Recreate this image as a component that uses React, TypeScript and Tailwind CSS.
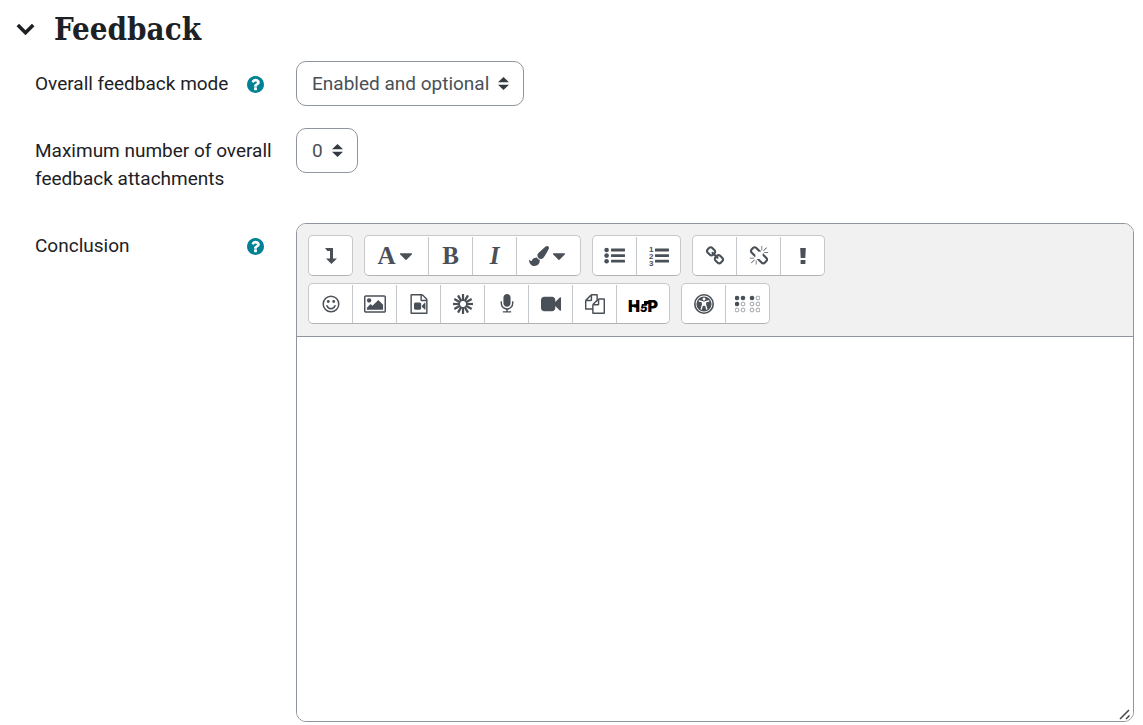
import type { ReactNode } from "react";

function Glyph({ d, className = "size-5", box = "0 0 1792 1792" }: { d: string; className?: string; box?: string }) {
  return (
    <svg viewBox={box} className={className} fill="currentColor" aria-hidden="true">
      <path d={d} />
    </svg>
  );
}

const QUESTION =
  "M1024 1376v-192q0-14-9-23t-23-9h-192q-14 0-23 9t-9 23v192q0 14 9 23t23 9h192q14 0 23-9t9-23zm256-672q0-88-55.5-163t-138.5-116-170-41q-243 0-371 213-15 24 8 42l132 100q7 6 19 6 16 0 25-12 53-68 86-92 34-24 86-24 48 0 85.5 26t37.5 59q0 38-20 61t-68 45q-63 28-115.5 86.5t-52.5 125.5v36q0 14 9 23t23 9h192q14 0 23-9t9-23q0-19 21.5-49.5t54.5-49.5q32-18 49-28.5t46-35 44.5-48 28-60.5 12.5-81zm384 192q0 209-103 385.5t-279.5 279.5-385.5 103-385.5-103-279.5-279.5-103-385.5 103-385.5 279.5-279.5 385.5-103 385.5 103 279.5 279.5 103 385.5z";
const CARET =
  "M1408 704q0 26-19 45l-448 448q-19 19-45 19t-45-19l-448-448q-19-19-19-45t19-45 45-19h896q26 0 45 19t19 45z";
const BRUSH =
  "M1615 0q70 0 122 46.5t52 116.5q0 63-45 151-332 629-465 752-97 91-218 91-126 0-216.5-92.5t-90.5-219.5q0-128 92-212l638-579q59-54 131-54zm-909 1034q39 76 106.5 130t150.5 76l1 71q4 213-129.5 347t-348.5 134q-123 0-218-46.5t-152.5-127.5-86.5-183-29-220q7 5 41 30t62 44.5 59 36.5 46 17q41 0 55-37 25-66 57.5-112.5t69.5-76 88-47.5 103-25.5 125-10.5z";
const LINK =
  "M1520 1216q0-40-28-68l-208-208q-28-28-68-28-42 0-72 32 3 3 19 18.5t21.5 21.5 15 19 13 25.5 3.5 27.5q0 40-28 68t-68 28q-15 0-27.5-3.5t-25.5-13-19-15-21.5-21.5-18.5-19q-33 31-33 73 0 40 28 68l206 207q27 27 68 27 40 0 68-26l147-146q28-28 28-67zm-703-705q0-40-28-68l-206-207q-28-28-68-28-39 0-68 27l-147 146q-28 28-28 67 0 40 28 68l208 208q27 27 68 27 42 0 72-31-3-3-19-18.5t-21.5-21.5-15-19-13-25.5-3.5-27.5q0-40 28-68t68-28q15 0 27.5 3.5t25.5 13 19 15 21.5 21.5 18.5 19q33-31 33-73zm895 705q0 120-85 203l-147 146q-83 83-203 83-121 0-204-85l-206-207q-83-83-83-203 0-123 88-209l-88-88q-86 88-208 88-120 0-204-84l-208-208q-84-84-84-204t85-203l147-146q83-83 203-83 121 0 204 85l206 207q83 83 83 203 0 123-88 209l88 88q86-88 208-88 120 0 204 84l208 208q84 84 84 204z";
const UNLINK =
  "M503 1271l-256 256q-10 9-23 9-12 0-23-9-9-10-9-23t9-23l256-256q10-9 23-9t23 9q9 10 9 23t-9 23zm169 41v320q0 14-9 23t-23 9-23-9-9-23v-320q0-14 9-23t23-9 23 9 9 23zm-224-224q0 14-9 23t-23 9h-320q-14 0-23-9t-9-23 9-23 23-9h320q14 0 23 9t9 23zm1264 128q0 120-85 203l-147 146q-83 83-203 83-121 0-204-85l-334-335q-21-21-42-56l239-18 273 274q28 28 68 27.5t68-27.5l147-146q28-28 28-67 0-40-28-68l-274-275 18-239q35 21 56 42l336 336q84 86 84 204zm-617-724l-239 18-273-274q-28-28-68-28-39 0-68 27l-147 146q-28 28-28 67 0 40 28 68l274 274-18 240q-35-21-56-42l-336-336q-84-86-84-204 0-120 85-203l147-146q83-83 203-83 121 0 204 85l334 335q21 21 42 56zm633 84q0 14-9 23t-23 9h-320q-14 0-23-9t-9-23 9-23 23-9h320q14 0 23 9t9 23zm-544-544v320q0 14-9 23t-23 9-23-9-9-23v-320q0-14 9-23t23-9 23 9 9 23zm407 151l-256 256q-11 9-23 9t-23-9q-9-10-9-23t9-23l256-256q10-9 23-9t23 9q9 10 9 23t-9 23z";
const PICTURE =
  "M576 576q0 80-56 136t-136 56-136-56-56-136 56-136 136-56 136 56 56 136zm1024 384v448h-1408v-192l320-320 160 160 512-512zm96-704h-1600q-13 0-22.5 9.5t-9.5 22.5v1216q0 13 9.5 22.5t22.5 9.5h1600q13 0 22.5-9.5t9.5-22.5v-1216q0-13-9.5-22.5t-22.5-9.5zm160 32v1216q0 66-47 113t-113 47h-1600q-66 0-113-47t-47-113v-1216q0-66 47-113t113-47h1600q66 0 113 47t47 113z";
const FILE_VIDEO =
  "M1596 380q28 28 48 76t20 88v1152q0 40-28 68t-68 28h-1344q-40 0-68-28t-28-68v-1600q0-40 28-68t68-28h896q40 0 88 20t76 48zm-444-244v376h376q-10-29-22-41l-313-313q-12-12-41-22zm384 1528v-1024h-416q-40 0-68-28t-28-68v-416h-768v1536h1280zm-576-896q52 0 90 38t38 90v384q0 52-38 90t-90 38h-384q-52 0-90-38t-38-90v-384q0-52 38-90t90-38h384zm492 2q20 8 20 30v576q0 22-20 30-8 2-12 2-14 0-23-9l-265-266v-90l265-266q9-9 23-9 4 0 12 2z";
const MICROPHONE =
  "M1472 704v128q0 221-147.5 384.5t-364.5 187.5v132h256q26 0 45 19t19 45-19 45-45 19h-640q-26 0-45-19t-19-45 19-45 45-19h256v-132q-217-24-364.5-187.5t-147.5-384.5v-128q0-26 19-45t45-19 45 19 19 45v128q0 185 131.5 316.5t316.5 131.5 316.5-131.5 131.5-316.5v-128q0-26 19-45t45-19 45 19 19 45zm-256-384v512q0 132-94 226t-226 94-226-94-94-226v-512q0-132 94-226t226-94 226 94 94 226z";
const VIDEO =
  "M1792 352v1088q0 42-39 59-13 5-25 5-27 0-45-19l-403-403v166q0 119-84.5 203.5t-203.5 84.5h-704q-119 0-203.5-84.5t-84.5-203.5v-704q0-119 84.5-203.5t203.5-84.5h704q119 0 203.5 84.5t84.5 203.5v165l403-402q18-19 45-19 12 0 25 5 39 17 39 59z";
const FILES =
  "M1696 384q40 0 68 28t28 68v1216q0 40-28 68t-68 28h-960q-40 0-68-28t-28-68v-288h-544q-40 0-68-28t-28-68v-672q0-40 20-88t48-76l408-408q28-28 76-48t88-20h416q40 0 68 28t28 68v328q68-40 128-40h416zm-544 213l-299 299h299v-299zm-640-384l-299 299h299v-299zm196 647l316-316v-416h-384v416q0 40-28 68t-68 28h-416v640h512v-256q0-40 20-88t48-76zm956 804v-1152h-384v416q0 40-28 68t-68 28h-416v640h896z";

const SPOKES = [0, 30, 60, 90, 120, 150, 180, 210, 240, 270, 300, 330];

const BRAILLE = [
  [2, 3, true], [8, 3, true], [2, 9, true], [8, 9, false], [2, 15, false], [8, 15, false],
  [17, 3, true], [23, 3, false], [17, 9, false], [23, 9, false], [17, 15, false], [23, 15, false],
] as const;

function ListIcon({ ordered = false }: { ordered?: boolean }) {
  return (
    <svg viewBox="0 0 22 24" className="h-6 w-[22px]" fill="currentColor" aria-hidden="true">
      <rect x="7" y="4.6" width="14" height="2.8" rx=".4" />
      <rect x="7" y="10.2" width="14" height="2.8" rx=".4" />
      <rect x="7" y="15.8" width="14" height="2.8" rx=".4" />
      {ordered ? (
        <g fontFamily="Liberation Sans, sans-serif" fontWeight="700" fontSize="8">
          <text x="1" y="7.500">1</text>
          <text x="1" y="14.500">2</text>
          <text x="1" y="21.500">3</text>
        </g>
      ) : (
        <>
          <circle cx="2.6" cy="6" r="2.3" />
          <circle cx="2.6" cy="11.6" r="2.3" />
          <circle cx="2.6" cy="17.2" r="2.3" />
        </>
      )}
    </svg>
  );
}

function Tool({ label, width = "w-[43px]", children }: { label: string; width?: string; children: ReactNode }) {
  return (
    <button
      type="button"
      aria-label={label}
      title={label}
      className={`mt-px box-content flex h-[38px] items-center justify-center border-[#c4c8cc] text-[#495057] ${width}`}
    >
      {children}
    </button>
  );
}

function Group({ children }: { children: ReactNode }) {
  return (
    <div role="group" className="flex divide-x divide-[#c4c8cc] rounded-[5px] border border-[#c8c8c8] border-b-[#b3b3b3] bg-white">
      {children}
    </div>
  );
}

function Help({ label }: { label: string }) {
  return (
    <button type="button" aria-label={label} className="mr-8 flex h-7 items-center text-[#008196]">
      <Glyph d={QUESTION} box="128 128 1536 1536" className="size-[17px]" />
    </button>
  );
}

function Choice({ id, options }: { id: string; options: string[] }) {
  return (
    <div className="relative w-fit">
      <select
        id={id}
        className="field-sizing-content h-[45px] appearance-none rounded-[10px] border border-[#8f959e] bg-white pr-[34px] pl-[15px] text-[19px] text-[#495057]"
      >
        {options.map((option) => (
          <option key={option}>{option}</option>
        ))}
      </select>
      <svg viewBox="0 0 4 5" className="pointer-events-none absolute top-4 right-[15px] h-[13px] w-[11px]" fill="#343a40" preserveAspectRatio="none" aria-hidden="true">
        <path d="M2 0L0 2h4zm0 5L0 3h4z" />
      </svg>
    </div>
  );
}

export default function App() {
  return (
    <main className="bg-white pr-[9px] pb-[3px] font-[Roboto,sans-serif] text-[19px] leading-7 text-[#1d2125]">
      <h3 className="flex items-center pt-[9px] pl-4">
        <button type="button" aria-label="Collapse Feedback" className="mr-[19px]">
          <svg viewBox="0 0 19 13" className="h-[13px] w-[19px]" fill="none" stroke="currentColor" strokeWidth="3.6" aria-hidden="true">
            <path d="M1.8 2l7.7 7.7L17.2 2" />
          </svg>
        </button>
        <span className="font-['DejaVu_Serif_Condensed','DejaVu_Serif',serif] text-[31px] leading-10 font-bold">Feedback</span>
      </h3>

      <form className="grid grid-cols-[261px_minmax(0,1fr)] gap-y-[22px] pt-3 pl-[35px]">
        <div className="flex items-start justify-between pt-[9px]">
          <label htmlFor="mode">Overall feedback mode</label>
          <Help label="Help with Overall feedback mode" />
        </div>
        <Choice id="mode" options={["Enabled and optional"]} />

        <div className="pt-[9px] pr-5 pb-2">
          <label htmlFor="attachments" className="block">Maximum number of overall feedback attachments</label>
        </div>
        <Choice id="attachments" options={["0"]} />

        <div className="flex items-start justify-between pt-[9px]">
          <label htmlFor="conclusion">Conclusion</label>
          <Help label="Help with Conclusion" />
        </div>
        <div className="relative overflow-hidden rounded-[10px] border border-[#8f959e]">
          <div role="toolbar" className="flex flex-col gap-[7px] border-b border-[#8f959e] bg-[#f1f1f1] px-[11px] pt-[11px] pb-3">
            <div className="flex flex-wrap gap-[11px]">
              <Group>
                <Tool label="Show more buttons">
                  <svg viewBox="0 0 14 16" className="h-4 w-[14px]" fill="currentColor" aria-hidden="true">
                    <path d="M1 0H9V10.500H13L7.400 16 2 10.500H6V3H3.400z" />
                  </svg>
                </Tool>
              </Group>
              <Group>
                <Tool label="Paragraph styles" width="w-[63px]">
                  <span className="font-['Liberation_Serif',serif] text-[25px] font-bold">A</span>
                  <Glyph d={CARET} box="384 640 1024 576" className="mr-1 ml-1 h-[7px] w-3" />
                </Tool>
                <Tool label="Bold">
                  <span className="font-['Liberation_Serif',serif] text-[25px] font-bold">B</span>
                </Tool>
                <Tool label="Italic">
                  <span className="font-['Liberation_Serif',serif] text-[25px] font-bold italic">I</span>
                </Tool>
                <Tool label="Font colour" width="w-[63px]">
                  <Glyph d={BRUSH} />
                  <Glyph d={CARET} box="384 640 1024 576" className="mr-1 ml-1 h-[7px] w-3" />
                </Tool>
              </Group>
              <Group>
                <Tool label="Unordered list"><ListIcon /></Tool>
                <Tool label="Ordered list"><ListIcon ordered /></Tool>
              </Group>
              <Group>
                <Tool label="Link"><Glyph d={LINK} /></Tool>
                <Tool label="Unlink"><Glyph d={UNLINK} /></Tool>
                <Tool label="Prevent automatic linking">
                  <svg viewBox="0 0 6 16" className="h-4 w-[6px]" fill="currentColor" aria-hidden="true">
                    <path d="M.2 0h5.6l-.5 10H.7zM.6 12h4.8v4H.6z" />
                  </svg>
                </Tool>
              </Group>
            </div>
            <div className="flex flex-wrap gap-[11px]">
              <Group>
                <Tool label="Emoji picker">
                  <svg viewBox="0 0 18 18" className="size-[18px]" fill="none" stroke="currentColor" strokeWidth="1.500" aria-hidden="true">
                    <circle cx="9" cy="9" r="7.8" />
                    <path d="M5 10.800a4.2 4.2 0 0 0 8 0" strokeLinecap="round" />
                    <g fill="currentColor" stroke="none">
                      <circle cx="6.3" cy="6.5" r="1.4" />
                      <circle cx="11.7" cy="6.5" r="1.4" />
                    </g>
                  </svg>
                </Tool>
                <Tool label="Insert image">
                  <Glyph d={PICTURE} box="-64 128 1920 1536" className="h-[18px] w-[22px]" />
                </Tool>
                <Tool label="Insert media file"><Glyph d={FILE_VIDEO} /></Tool>
                <Tool label="Insert snowburst">
                  <svg viewBox="-10 -10 20 20" className="size-5" stroke="currentColor" strokeWidth="2.2" aria-hidden="true">
                    {SPOKES.map((angle) => (
                      <path key={angle} d="M0-3V-10" transform={`rotate(${angle})`} />
                    ))}
                  </svg>
                </Tool>
                <Tool label="Record audio"><Glyph d={MICROPHONE} /></Tool>
                <Tool label="Record video"><Glyph d={VIDEO} /></Tool>
                <Tool label="Manage files"><Glyph d={FILES} /></Tool>
                <Tool label="Insert H5P" width="w-[52px]">
                  <svg viewBox="0 0 34 20" className="mt-[3px] h-5 w-[34px]" aria-hidden="true">
                    <path d="M8 8.500h5v3H8zM18 5h6v3h-6z" fill="#000" />
                    <text x="17" y="16" textAnchor="middle" fontFamily="Inter, sans-serif" fontWeight="900" fontSize="16" fill="#000">
                      H<tspan fontSize="11" fontStyle="italic">5</tspan>P
                    </text>
                  </svg>
                </Tool>
              </Group>
              <Group>
                <Tool label="Accessibility checker">
                  <svg viewBox="0 0 20 20" className="size-5" aria-hidden="true">
                    <circle cx="10" cy="10" r="9.200" fill="none" stroke="currentColor" strokeWidth="1.6" />
                    <circle cx="10" cy="10" r="7.6" fill="currentColor" />
                    <circle cx="10" cy="5" r="1.5" fill="#fff" />
                    <path d="M5.200 7l3.300.8v3L7.200 15.200M14.800 7l-3.300.8v3l1.300 4.400" fill="none" stroke="#fff" strokeWidth="1.3" strokeLinecap="round" />
                    <path d="M8.200 7.500h3.600v4.300H8.200z" fill="#fff" />
                  </svg>
                </Tool>
                <Tool label="Screenreader helper">
                  <svg viewBox="0 0 25 18" className="h-[18px] w-[25px]" aria-hidden="true">
                    {BRAILLE.map(([x, y, on]) => (
                      <circle key={`${x}-${y}`} cx={x} cy={y} r={on ? 2.3 : 1.9} fill={on ? "currentColor" : "none"} stroke={on ? "none" : "currentColor"} strokeWidth=".5" />
                    ))}
                  </svg>
                </Tool>
              </Group>
            </div>
          </div>
          <textarea id="conclusion" className="block h-96 w-full resize-none bg-white p-3 outline-none" />
          <svg viewBox="0 0 12 12" className="pointer-events-none absolute right-[2px] bottom-[1px] size-3" stroke="#444" strokeWidth="1.5" aria-hidden="true">
            <path d="M1 11L10 2M7 11L10.500 7.500" />
          </svg>
        </div>
      </form>
    </main>
  );
}
